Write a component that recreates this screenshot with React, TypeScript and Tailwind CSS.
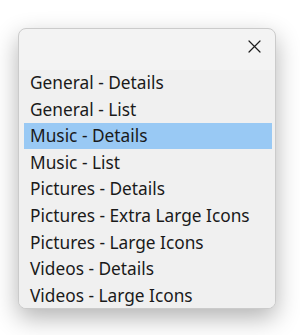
const items = [
  'General - Details',
  'General - List',
  'Music - Details',
  'Music - List',
  'Pictures - Details',
  'Pictures - Extra Large Icons',
  'Pictures - Large Icons',
  'Videos - Details',
  'Videos - Large Icons',
];

const selected = 'Music - Details';

function CloseIcon() {
  return (
    <svg width="13" height="13" viewBox="0 0 13 13" fill="none">
      <path d="M1 1L12 12M12 1L1 12" stroke="#1c1c1c" strokeWidth="1.2" strokeLinecap="round" />
    </svg>
  );
}

export default function App() {
  return (
    <div className="w-[300px] h-[335px] bg-white overflow-hidden">
      <div className="ml-[18px] mt-[28px] w-[258px] h-[281px] rounded-[8px] border border-[#cbcbcb] bg-[#f3f3f3] overflow-hidden shadow-[0_9px_24px_rgba(0,0,0,0.3)] flex flex-col">
        <div className="h-[40.7px] shrink-0 flex justify-end pt-[11px] pr-[14px]">
          <CloseIcon />
        </div>
        <div className="pl-[5px] pr-[3px] bg-[#f0f0f0] flex-1" style={{ fontFamily: '"Noto Sans", "Open Sans", sans-serif' }}>
          {items.map((item) => (
            <div
              key={item}
              className={
                item === selected
                  ? 'h-[26.6px] flex items-center pl-[6px] bg-[#99c9f4] text-[17.3px] text-[#1a1a1a] whitespace-nowrap'
                  : 'h-[26.6px] flex items-center pl-[6px] text-[17.3px] text-[#1a1a1a] whitespace-nowrap'
              }
            >
              {item}
            </div>
          ))}
        </div>
      </div>
    </div>
  );
}
